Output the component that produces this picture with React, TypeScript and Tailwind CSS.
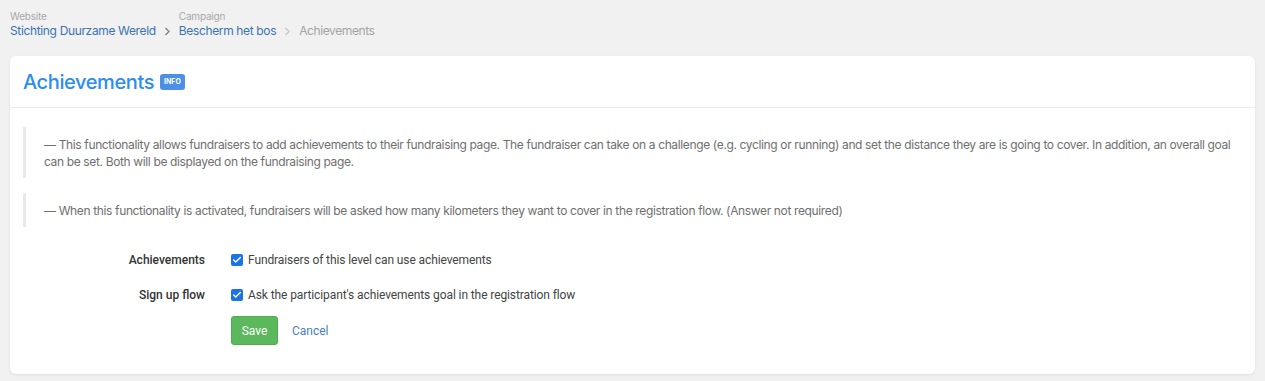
import { Check } from "lucide-react";

// ─── Helpers ──────────────────────────────────────────────────────────────────

function Crumb({ caption, label }: { caption: string; label: string }) {
    return (
        <div className="flex flex-col">
            <span className="text-[10px] leading-[13px] tracking-[-0.2px] text-[#a8a8a8]">{caption}</span>
            <span className="text-[12px] leading-[15px] tracking-[-0.35px] text-[#3b73b3]">{label}</span>
        </div>
    );
}

function Chevron({ light }: { light?: boolean }) {
    return (
        <svg width="7" height="9" viewBox="0 0 7 9" className="mx-[8px] mb-[2px]">
            <path d="M1.5 1l3.5 3.5L1.5 8" fill="none" stroke={light ? "#c4c4c4" : "#7a7a7a"} strokeWidth="1.2" />
        </svg>
    );
}

function Quote({ children }: { children: React.ReactNode }) {
    return (
        <div className="border-l-[3px] border-[#e9e9e9] pl-[18px] py-[8.5px] text-[12px] leading-[17px] tracking-[-0.36px] text-[#6f6f6f]">
            {children}
        </div>
    );
}

function CheckRow({ label, text }: { label: string; text: string }) {
    return (
        <div className="flex items-center h-[20px]" style={{ fontFamily: "Roboto, 'Liberation Sans', sans-serif" }}>
            <span className="w-[182px] text-right text-[12px] font-medium text-[#333]">{label}</span>
            <span className="ml-[26px] flex h-[12px] w-[12px] items-center justify-center rounded-[2px] bg-[#1a73e8]">
                <Check className="h-[10px] w-[10px] text-white" strokeWidth={3.5} />
            </span>
            <span className="ml-[5px] text-[12px] tracking-[-0.1px] text-[#444]">{text}</span>
        </div>
    );
}

// ─── Component ────────────────────────────────────────────────────────────────

export default function App() {
    return (
        <div
            className="min-h-[381px] bg-[#f1f1f1] px-[10px] pt-[10px] pb-[7px]"
            style={{ fontFamily: "Inter, 'Noto Sans', sans-serif" }}
        >
            {/* ── Breadcrumbs ── */}
            <div className="flex items-end">
                <Crumb caption="Website" label="Stichting Duurzame Wereld" />
                <Chevron />
                <Crumb caption="Campaign" label="Bescherm het bos" />
                <Chevron light />
                <span className="text-[12px] leading-[15px] tracking-[-0.4px] text-[#a3a3a3]">Achievements</span>
            </div>

            {/* ── Card ── */}
            <div className="mt-[18px] h-[318px] rounded-[6px] bg-white shadow-[0_1px_3px_rgba(0,0,0,0.08)]">
                <div className="flex h-[52px] items-center gap-[6px] border-b border-[#ebebeb] px-[13px]">
                    <h1 className="text-[20px] font-medium tracking-[-0.4px] text-[#2c8cf0]">Achievements</h1>
                    <span className="mt-[1px] rounded-[3px] bg-[#4b8fe6] px-[4px] py-[3px] text-[7px] font-bold leading-[10px] text-white">
                        INFO
                    </span>
                </div>

                <div className="px-[13px] pt-[19px]">
                    <Quote>
                        — This functionality allows fundraisers to add achievements to their fundraising page. The fundraiser can take on a challenge (e.g. cycling or running) and set the distance they are is going to cover. In addition, an overall goal can be set. Both will be displayed on the fundraising page.
                    </Quote>
                    <div className="h-[15px]" />
                    <Quote>
                        — When this functionality is activated, fundraisers will be asked how many kilometers they want to cover in the registration flow. (Answer not required)
                    </Quote>

                    <div className="mt-[23px] flex flex-col gap-[15px]">
                        <CheckRow label="Achievements" text="Fundraisers of this level can use achievements" />
                        <CheckRow label="Sign up flow" text="Ask the participant's achievements goal in the registration flow" />
                    </div>

                    <div className="ml-[208px] mt-[11px] flex items-center gap-[14px]" style={{ fontFamily: "Roboto, 'Liberation Sans', sans-serif" }}>
                        <button className="h-[29px] w-[47px] rounded-[3px] border border-[#4cae4c] bg-[#5cb85c] text-[12px] text-white">
                            Save
                        </button>
                        <span className="text-[12px] text-[#4a7fc1]">Cancel</span>
                    </div>
                </div>
            </div>
        </div>
    );
}
